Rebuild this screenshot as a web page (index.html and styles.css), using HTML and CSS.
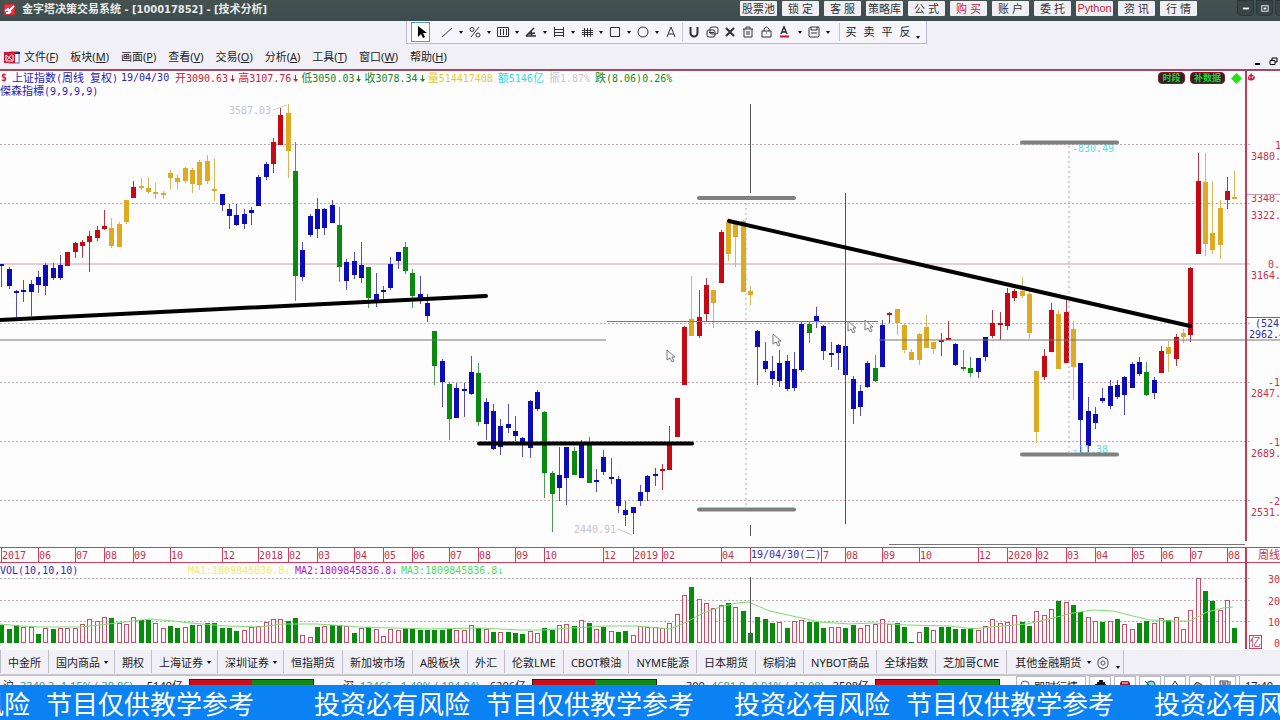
FILE: index.html
```html
<!DOCTYPE html>
<html lang="zh-CN">
<head>
<meta charset="utf-8">
<title>金字塔决策交易系统 - [100017852] - [技术分析]</title>
<link rel="stylesheet" href="styles.css">
</head>
<body>
<header class="titlebar">
  <svg class="app-logo" viewBox="0 0 13 13"><rect width="13" height="13" rx="1" fill="#b9202b"/><rect x="1.500" y="1.500" width="10" height="10" fill="#e5323e"/><path d="M2 8 5 6l1 2 5-5M3 10h3l2-2" stroke="#fff" stroke-width="2" fill="none"/></svg>
  <h1 class="title">金字塔决策交易系统 - [100017852] - [技术分析]</h1>
  <nav class="quick">
    <button>股票池</button><button>锁 定</button><button>客 服</button><button>策略库</button><button>公 式</button><button class="hot">购 买</button><button>账 户</button><button>委 托</button><button class="hot latin">Python</button><button>资 讯</button><button>行 情</button>
  </nav>
  <div class="win-controls">
    <button aria-label="最小化"><svg viewBox="0 0 10 10"><path d="M2 5h7" stroke="#fff" stroke-width="2"/></svg></button>
    <button aria-label="还原"><svg viewBox="0 0 10 10"><rect x="2" y="2" width="7" height="6" fill="none" stroke="#fff"/><rect x="4" y="4" width="3" height="2" fill="#fff"/></svg></button>
    <button aria-label="关闭"></button>
  </div>
</header>

<div class="toolrow">
  <div class="toolbar">
    <button class="pick" aria-label="选择"><svg viewBox="0 0 14 14"><path d="M4 1v11l3-3 2 4 2-1-2-4h4z" fill="#000"/></svg></button>
    <button aria-label="直线"><svg viewBox="0 0 14 14"><path d="M2 12 12 3"/></svg></button><i class="caret"></i>
    <button aria-label="百分比"><svg viewBox="0 0 14 14"><circle cx="4" cy="4.500" r="2"/><circle cx="10" cy="10" r="2"/><path d="M11 2 3 12"/></svg></button><i class="caret"></i>
    <button aria-label="周期线"><svg viewBox="0 0 14 14"><path d="M1.500 2.500h11v9h-11zM4.500 4v6M7.500 4v6M10.500 4v6"/></svg></button><i class="caret"></i>
    <button aria-label="角度线"><svg viewBox="0 0 14 14"><path d="M2 11h10M2 11l8-8M4 9l7-1M7 6l1 5" stroke-width="1.500"/></svg></button><i class="caret"></i>
    <button aria-label="通道"><svg viewBox="0 0 14 14"><path d="M2.500 2v10M11.500 2v10M2 4.500h10M2 7.500h10M2 10.500h10"/></svg></button><i class="caret"></i>
    <button aria-label="网格"><svg viewBox="0 0 14 14"><path d="M4.500 3v9M7.500 3v9M10.500 3v9M2 5.500h11M2 7.500h11M2 9.500h11"/></svg></button><i class="caret"></i>
    <button aria-label="矩形"><svg viewBox="0 0 14 14"><path d="M2.500 2.500h9v9h-9z"/></svg></button><i class="caret"></i>
    <button aria-label="圆"><svg viewBox="0 0 14 14"><circle cx="7" cy="7" r="5"/></svg></button><i class="caret"></i>
    <button aria-label="文字"><svg viewBox="0 0 14 14"><path d="M3 12 7 2l4 10M4 9h6"/></svg></button>
    <span class="sep"></span>
    <button class="wide" aria-label="磁铁"><svg viewBox="0 0 14 14"><path d="M3.500 2v6a3 3 0 0 0 7 0V2" stroke-width="2"/></svg></button>
    <button class="wide" aria-label="复制"><svg viewBox="0 0 14 14"><rect x="5" y="2" width="8" height="7" rx="2"/><rect x="2" y="5" width="8" height="7" rx="2"/><path d="M4 7.500h5"/></svg></button>
    <button class="wide" aria-label="删除"><svg viewBox="0 0 14 14"><path d="m3 3 8 8M11 3l-8 8" stroke-width="2"/></svg></button>
    <button class="wide" aria-label="清空"><svg viewBox="0 0 14 14"><path d="M2 4h10M5 4V2h4v2M3 4v8h8V4M6 6v4M8 6v4"/></svg></button>
    <button class="wide" aria-label="锁定"><svg viewBox="0 0 14 14"><path d="M3 6h9v6H3zM5 6V4q2.500-4 5 0v2M7 8h1"/></svg></button>
    <button class="wide" aria-label="颜色"><svg viewBox="0 0 14 14"><path d="m4 9 3-7 3 7M5 7h4" stroke-width="1.500"/><path d="M3 11.500h9" stroke="#c8102e" stroke-width="2"/></svg></button><i class="caret"></i>
    <button aria-label="保存"><svg viewBox="0 0 14 14"><path d="M2 3.500 3.500 2h8L12 3v8l-1 1H3l-1-1zM4 2v3h6V2M4 8h6"/></svg></button><i class="caret"></i>
    <span class="sep"></span>
    <button class="word">买</button><button class="word">卖</button><button class="word">平</button><button class="word">反</button><i class="caret low"></i>
  </div>
</div>

<div class="menubar">
  <svg class="doc-icon" viewBox="0 0 16 13"><rect x="6" y="1" width="9" height="11" fill="#fff" stroke="#47619b"/><path d="M6 2h10" stroke="#2e2a96" stroke-width="2"/><rect y="1" width="11" height="11" fill="#d31535"/><path d="M2 4v6h7V4M2 4l6 5M3 9l5-6" stroke="#fff" stroke-width="1" fill="none"/></svg>
  <nav class="menus">
    <button>文件(<u>F</u>)</button><button>板块(<u>M</u>)</button><button>画面(<u>P</u>)</button><button>查看(<u>V</u>)</button><button>交易(<u>O</u>)</button><button>分析(<u>A</u>)</button><button>工具(<u>T</u>)</button><button>窗口(<u>W</u>)</button><button>帮助(<u>H</u>)</button>
  </nav>
  <div class="doc-controls">
    <button aria-label="最小化文档"><svg viewBox="0 0 9 9"><path d="M1 7h5" stroke="#000" stroke-width="2"/></svg></button>
    <button aria-label="还原文档"><svg viewBox="0 0 9 9"><path d="M3 3V1h5v4H6M1 3.500h5v4H1z" fill="none" stroke="#000"/></svg></button>
  </div>
</div>

<main>
  <div class="info">
    <div class="info-main">
      <div class="quote">
        <b class="red">$</b>
        <span class="name blue"><em>上证指数</em>(<em>周线</em> <em>复权</em>)</span>
        <span class="blue date">19/04/30</span>
        <span class="prices"><span class="red"><em>开</em>3090.63<s></s></span><span class="red"><em>高</em>3107.76<s></s></span><span class="green"><em>低</em>3050.03<s></s></span><span class="green"><em>收</em>3078.34<s></s></span><span class="gold"><em>量</em>514417408</span></span>
        <span class="cyan"><em>额</em>5146<em>亿</em></span>
        <span class="gray"><em>振</em>1.87%</span>
        <span class="green"><em>跌</em>(8.06)0.26%</span>
      </div>
      <div class="indicator blue"><em>傑森指標</em>(9,9,9,9)</div>
    </div>
    <div class="badges">
      <button class="badge">时段</button><button class="badge">补数据</button>
      <svg class="diamond" viewBox="0 0 10 10"><path d="m5 0 5 5-5 5-5-5z" fill="#25e012"/></svg>
    </div>
    <div class="info-axis"><svg viewBox="0 0 9 9"><path d="M4 0v8M1 3h6M0 4q0 4 4 4t4-4" fill="none" stroke="#d01838" stroke-width="2"/></svg></div>
  </div>
  <svg class="chart" id="chart" viewBox="0 98 1280 552" role="img" aria-label="上证指数周线与成交量"></svg>
</main>

<nav class="tabs">
  <button>中金所</button><button>国内商品<i class="caret"></i></button><button>期权</button><button>上海证券<i class="caret"></i></button><button>深圳证券<i class="caret"></i></button><button>恒指期货</button><button>新加坡市场</button><button>A股板块</button><button>外汇</button><button>伦敦LME</button><button>CBOT粮油</button><button>NYME能源</button><button>日本期货</button><button>棕榈油</button><button>NYBOT商品</button><button>全球指数</button><button>芝加哥CME</button><button class="last">其他金融期货<i class="caret"></i><svg class="gear" viewBox="0 0 14 14"><path d="M5 2 7 1l2 1 2 1 1 2v4l-1 2-2 1-2 1-2-1-2-1-1-2V5l1-2z" fill="none" stroke="#555"/><circle cx="7" cy="7" r="2" fill="none" stroke="#555"/></svg><i class="caret low"></i></button>
</nav>

<div class="status">
  <div class="market"><span>沪</span><span class="teal">3340.3 -1.15% (-38.86)</span><span>5149亿</span></div><div class="ratio"></div>
  <div class="market"><span>深</span><span class="teal">13466. -1.48% (-184.84)</span><span>6206亿</span></div><div class="ratio"></div>
  <div class="market"><span>300</span><span class="teal">4681.8 -0.91% (-43.08)</span><span>3508亿</span></div><div class="ratio"></div>
  <div class="tray">
    <button class="live"><svg viewBox="0 0 12 12"><circle cx="6" cy="6" r="4" fill="none" stroke="#668"/></svg>即时行情</button>
    <button aria-label="用户"><svg viewBox="0 0 12 12"><path d="M1 4h2V2h2V0h4v2h2v2h1v6H1z" fill="#15181c"/></svg></button>
    <button aria-label="数据"><svg viewBox="0 0 12 12"><rect x="1" y="1" width="10" height="10" rx="3" fill="#a51035"/><path d="M3 3h6" stroke="#fff"/></svg></button>
    <button aria-label="搜索"><svg viewBox="0 0 12 12"><circle cx="7" cy="5" r="4" fill="#8fd6d6" stroke="#256"/><path d="m1 1 4 4" stroke="#153"/></svg></button>
    <button aria-label="提醒"><svg viewBox="0 0 12 12"><path d="M3 11V6l3-5 3 5v5z" fill="none" stroke="#333"/></svg></button>
    <button aria-label="云端"><svg viewBox="0 0 12 12"><path d="M0 7q1-6 5-4l7 5v4H0z" fill="#aaa" stroke="#333"/></svg></button>
    <button aria-label="日志"><svg viewBox="0 0 12 12"><path d="M1 1h8v9H1zM11 1v10M3 3h4M3 5h4" fill="#ccd" stroke="#444"/></svg></button>
    <time class="clock">17:40</time>
  </div>
</div>

<footer class="ticker">
  <p class="lead"><span>投资必有风险</span><span>节目仅供教学参考</span></p>
  <p><span>投资必有风险</span><span>节目仅供教学参考</span></p>
  <p><span>投资必有风险</span><span>节目仅供教学参考</span></p>
  <p><span>投资必有风险</span></p>
</footer>
<script src="chart.js"></script>
</body>
</html>
```
FILE: styles.css
```css
* { box-sizing: border-box; }
body {
  margin: 0;
  overflow-x: hidden;
  background: #fdfdfd;
  color: #222;
  font: 11px/16px "Noto Sans", "Noto Sans CJK SC", sans-serif;
}
button {
  margin: 0;
  padding: 0;
  border: 0;
  background: none;
  color: inherit;
  font: inherit;
  white-space: nowrap;
}
svg { display: block; flex: none; }

/* title bar */
.titlebar {
  display: flex;
  height: 21px;
  padding-left: 3px;
  align-items: flex-start;
  background: linear-gradient(#45524f, #3c4c4e);
  overflow: hidden;
}
.app-logo { width: 13px; height: 13px; margin: 3px 6px 0 0; }
.title {
  flex: 1;
  margin: 0;
  color: #e6eaea;
  font: 700 11px/19px "DejaVu Sans Condensed", "DejaVu Sans", "Noto Sans CJK SC", sans-serif;
  white-space: nowrap;
}
.quick { display: grid; grid-template-columns: repeat(11, 37px); gap: 5px; padding-top: 1px; }
.quick button {
  height: 15px;
  border-radius: 1px;
  background: #f1eff6;
  color: #333;
  line-height: 15px;
}
.quick .hot { color: #c42838; }
.quick .latin { font-family: "Liberation Sans", sans-serif; }
.win-controls { display: flex; gap: 2px; margin: 0 -12px 0 40px; }
.win-controls button {
  width: 17px;
  height: 16px;
  padding: 3px;
  border: 1px solid #2b3839;
  border-radius: 0 0 4px 4px;
  background: #394546;
}
.win-controls svg { width: 9px; height: 9px; }

/* drawing toolbar */
.toolrow { height: 24px; padding-left: 406px; background: #f1f0f7; }
.toolbar {
  display: inline-flex;
  height: 23px;
  padding: 0 4px;
  align-items: center;
  border: solid #b9b9cc;
  border-width: 0 1px 1px;
  background: #f6f5fa;
}
.toolbar button { width: 14px; display: flex; justify-content: center; }
.toolbar svg { width: 14px; height: 14px; fill: none; stroke: #333; }
.toolbar .pick {
  width: 19px;
  height: 20px;
  align-items: center;
  margin-right: 10px;
  border: 1px solid #549cc4;
  background: #fff;
}
.toolbar .pick svg { stroke: none; }
.toolbar .wide { width: 18px; }
.toolbar .word { width: 18px; }
.sep { width: 1px; height: 18px; margin: 0 2px 0 4px; background: #c3c3cf; }
.caret { display: inline-flex; width: 14px; justify-content: center; }
.caret::after { content: ""; border: 2px solid transparent; border-top: 3px solid #111; border-bottom: 0; }
.caret.low { width: 8px; align-self: flex-end; padding-bottom: 4px; }

/* menu */
.menubar {
  display: flex;
  height: 26px;
  padding: 0 2px 0 4px;
  align-items: center;
  background: #f1f0f7;
  border-bottom: 2px solid #a04a60;
}
.doc-icon { width: 16px; height: 13px; margin-right: 4px; }
.menus { display: flex; flex: 1; gap: 12px; }
.menus u { text-underline-offset: 1px; }
.doc-controls { display: flex; gap: 6px; padding-top: 8px; }
.doc-controls svg { width: 9px; height: 9px; }

/* quote strip */
.info { display: flex; height: 27px; font: 10px/14px "DejaVu Sans Mono", monospace; white-space: nowrap; }
.info em { font: 11px/13px "Noto Sans CJK SC", sans-serif; }
.info-main { flex: 1; }
.quote { display: flex; height: 13px; padding-left: 1px; gap: 5px; }
.quote > b { width: 6px; }
.name { width: 104px; }
.date { width: 49px; }
.prices { display: flex; }
.indicator { height: 13px; line-height: 13px; }
.quote s {
  display: inline-block;
  position: relative;
  width: 10px;
  height: 7px;
  text-decoration: none;
}
.quote s::before { content: ""; position: absolute; left: 4px; top: 0; width: 1px; height: 6px; background: currentColor; }
.quote s::after { content: ""; position: absolute; left: 2px; top: 4px; border: solid transparent; border-width: 3px 2px 0 3px; border-top-color: currentColor; }
.blue { color: #2a22b8; }
.red { color: #d0203c; }
.green { color: #168a1c; }
.gold { color: #d8cf3c; }
.cyan { color: #2be0e4; }
.gray { color: #c9c9cc; }
.badges { display: flex; gap: 5px; padding-right: 3px; }
.badge {
  height: 12px;
  margin-top: 1px;
  padding: 0 3px;
  border: 1px solid #8c1723;
  border-radius: 4px;
  background: #2d2424;
  color: #1fd52e;
  font: 700 9px/10px "Noto Sans CJK SC", sans-serif;
}
.badge:first-child { min-width: 27px; }
.badge + .badge { min-width: 35px; }
.diamond { width: 11px; height: 11px; margin: 2px 0 0 1px; }
.info-axis { width: 35px; border-left: 2px solid #c43c56; padding: 2px 0 0 1px; }
.info-axis svg { width: 7px; height: 8px; }

/* chart */
.chart { width: 100%; height: auto; }
.chart text { font: 10px "DejaVu Sans Mono", "Noto Sans CJK SC", monospace; fill: #c8324c; }
.chart .cjk { font: 11px "Noto Sans CJK SC", sans-serif; }
.chart .t-blue { fill: #342ab4; }
.chart .t-soft { fill: #c4c4d2; }
.chart .t-cyan { fill: #52e2e4; }
.chart .t-gold { fill: #f0ec70; }
.chart .t-purple { fill: #b414c4; }
.chart .t-lime { fill: #50dc5c; }
.grid { stroke: #c2a8b2; stroke-dasharray: 2 2; }
.zero { stroke: #cf9aa9; }
.frame { stroke: #d0405a; fill: none; }
.axis { stroke: #c43c56; stroke-width: 2; }
.cross { stroke: #777; }
.cross-dark { stroke: #555; }
.guide { stroke: #aaa; stroke-dasharray: 2 3; }
.range { stroke: #808080; stroke-width: 4; stroke-linecap: round; }
.trend { stroke: #000; stroke-width: 4; stroke-linecap: round; }
.mean { fill: none; stroke: #7ddc72; }
.leader { stroke: #ccc; }
.pointer { fill: #fff; stroke: #777; }
.vol-up { fill: #fff5f7; stroke: #c4506a; }
.vol-down { fill: #088c0c; }

/* market tabs */
.tabs {
  display: flex;
  height: 26px;
  padding-bottom: 1px;
  background: #f1f0f7;
  border-bottom: 2px solid #c4c4cc;
  overflow: hidden;
}
.tabs button {
  display: flex;
  padding: 2px 7px 0;
  align-items: center;
  border-left: 1px solid #bcbccb;
}
.tabs .caret { width: 8px; margin-right: -1px; justify-content: flex-end; }
.tabs .last { padding: 2px 4px 0 8px; border-right: 1px solid #bcbccb; }
.tabs .last .caret { width: 10px; }
.gear { width: 14px; height: 14px; margin-left: 6px; }

/* status strip */
.status {
  display: flex;
  height: 9px;
  padding-left: 3px;
  background: #f8f8fb;
  overflow: hidden;
  white-space: nowrap;
}
.market { display: flex; flex: 0 1 186px; gap: 6px; height: 16px; padding-top: 2px; }
.market + .ratio + .market { flex-basis: 218px; padding-left: 29px; }
.market span:last-child { margin-left: auto; margin-right: 6px; }
.teal { color: #4d9580; }
.ratio {
  flex: 0 0 125px;
  height: 12px;
  margin-top: 3px;
  border: 1px solid #222;
  background: linear-gradient(90deg, #cc0d1c 50%, #128a1a 50%);
}
.tray { display: flex; gap: 3px; margin-left: 16px; }
.tray button { width: 22px; height: 20px; padding: 3px 4px; border: 1px solid #b8b8c0; background: #fff; }
.tray svg { width: 12px; height: 12px; }
.tray .live { display: flex; width: 70px; gap: 3px; padding: 2px; }
.clock { padding: 2px 0 0 5px; border-left: 1px solid #b8b8c0; }

/* scrolling notice */
.ticker {
  display: flex;
  height: 35px;
  background: #0a82f4;
  color: #fff;
  font: 26px/35px "Noto Sans CJK SC", sans-serif;
  overflow: hidden;
  white-space: nowrap;
}
.ticker p { display: flex; flex: none; gap: 16px; margin: 0; padding-right: 40px; }
.ticker .lead { margin-left: -126px; padding-right: 60px; }
```
FILE: chart.js
```js
// One entry per week: body colour, then y of high, body top, body bottom, low.
const candles = `b264,264,266,287 b267,269,286,289 b290,291,293,317 b280,290,292,302 b280,284,292,316 b271,277,285,293 b263,265,286,295 b263,268,278,280 b255,265,278,280 r252,252,266,266
r242,243,252,258 r240,242,246,258 r231,236,242,272 r226,230,238,241 r210,226,229,230 y218,228,246,248 y222,224,247,247 y200,200,222,224 r181,187,198,198 y178,186,187,190
y177,188,192,194 y183,192,193,199 y191,193,195,199 y170,173,178,189 y175,178,182,189 y167,168,181,183 y168,170,184,193 y160,162,185,190 y155,161,181,184 y159,189,191,201
b194,194,205,211 b204,209,216,229 b204,215,225,226 b209,214,224,229 b207,210,213,225 b175,177,206,206 b162,164,177,180 r138,142,164,173 r108,115,145,145 y104,113,151,178
g142,171,276,301 b242,250,277,281 b214,216,235,237 b198,209,229,238 b208,209,228,235 b200,205,223,223 g207,225,267,282 b259,262,281,290 b252,261,275,279 b242,265,278,283
g267,267,298,308 b273,294,300,307 b286,290,291,299 b257,264,288,290 b252,252,261,269 g242,247,271,274 g269,273,296,308 b276,294,298,304 b294,303,316,322 g331,331,366,385
b359,361,382,407 g382,384,419,440 b383,388,418,418 b383,389,391,417 b356,372,394,395 g363,373,422,426 b398,402,424,440 b404,411,449,450 b419,426,447,455 b404,424,428,433
b416,431,436,441 b437,438,443,457 b400,401,448,458 b390,392,409,411 g411,412,473,498 g471,473,494,532 b447,475,488,501 b447,447,478,505 g447,451,475,475 b440,445,478,478
g437,443,483,483 b469,480,482,492 b450,457,472,475 b458,477,479,484 b476,479,506,513 b501,510,515,526 b507,507,513,534 b485,492,501,506 b475,476,492,501 b468,474,476,486
r464,469,470,490 r426,445,470,470 r398,398,437,437 r326,327,385,385 y276,319,336,336 r290,317,336,338 r278,285,314,321 y290,290,303,328 r230,232,283,283 y218,222,254,261
y222,224,237,267 y220,221,292,292 y286,291,295,305 b330,331,347,385 b342,361,369,372 b356,371,379,385 b350,363,381,387 b355,361,389,391 b352,369,388,391 b322,324,370,372
g321,324,333,343 b307,316,321,328 b325,326,351,360 b342,353,354,367 b344,345,353,370 b340,346,375,380 b376,379,409,424 b385,391,407,416 b361,363,387,388 g355,368,381,382
b320,325,367,367 r312,313,315,323 y309,309,323,335 y323,325,350,353 y349,352,360,360 y333,334,360,365 y315,327,348,348 y342,342,349,354 r333,340,341,356 r321,338,340,340
b343,344,365,366 g350,367,368,371 g357,368,373,377 b358,358,372,378 b337,337,357,361 r310,323,336,338 r312,323,325,340 r288,293,326,330 r289,291,298,301 y277,291,296,298
y290,294,333,339 y371,371,432,443 r349,356,377,380 r303,310,352,352 y310,314,369,369 r299,312,363,363 y321,329,367,400 b363,363,420,456 b397,411,446,453 b407,414,423,429
b388,398,401,403 b380,386,406,409 b380,385,397,399 b376,377,395,415 b362,364,388,388 b357,362,374,376 g362,372,395,396 b377,380,393,399 r346,351,373,373 y341,347,354,372
r334,337,359,366 y329,333,337,343 r267,268,335,342 r153,181,254,254 y153,182,244,256 y181,233,250,254 y200,208,245,259 r177,191,200,209 y171,197,198,198`.split(/\s+/);

// Volume per week: g = falling, r = rising, then bar height in thirds of a unit.
const volumes = `g55 g42 g53 r47 r49 g27 r45 g42 r44 r44 r46 r58 r72 r67 r79 g76 r59 r57 r78 g70 g70 r60 r45 g51 g44 r47 g55 r54 g60 g60
g46 g46 g37 r40 r48 r51 r63 r72 r72 g67 g74 r24 r17 g49 r51 g55 g53 r51 g30 r45 g47 r42 r21 r42 r40 g45 g42 g39 g39 g39
g39 g42 r39 r39 r55 g45 r41 g34 r32 g34 g31 g28 r35 r30 g46 g40 r55 r57 g52 r70 g60 r42 g48 r37 g34 g37 r24 r51 r49 r47
r45 r60 r87 r144 g168 r132 r120 r105 r115 g120 r108 g97 g31 g79 g71 g61 r62 g46 r67 r69 g63 g64 g46 r48 r48 g44 g53 r45 r54 r56
r72 r57 g60 g49 g4 r33 g49 r39 g49 g49 g43 g41 g44 r39 r51 r72 r60 r63 r84 g64 g52 r95 r84 r101 g127 r123 g115 g94 r78 r67
g62 r66 g72 r57 r42 g61 g66 r60 r74 g69 r78 r42 r99 r195 g156 g127 r99 r130 g46`.split(/\s+/);

const months = [[0, '2017'], [5, '06'], [10, '07'], [14, '08'], [18, '09'], [23, '10'], [30, '12'], [35, '2018'], [39, '02'], [43, '03'], [48, '04'], [52, '05'], [56, '06'], [61, '07'], [65, '08'], [70, '09'], [74, '10'], [82, '12'], [86, '2019'], [90, '02'], [98, '04'], [115, '08'], [120, '09'], [125, '10'], [133, '12'], [137, '2020'], [141, '02'], [145, '03'], [149, '04'], [154, '05'], [158, '06'], [162, '07'], [167, '08']];
const mean = [0, 624, 20, 626, 40, 627, 80, 627, 100, 625, 133, 621, 150, 619, 173, 621, 190, 623, 227, 626, 260, 627, 283, 624, 317, 624, 360, 627, 430, 629, 480, 628, 520, 630, 543, 630, 570, 628, 607, 626, 637, 626, 670, 629, 687, 622, 703, 613, 720, 607, 737, 603, 748, 602, 770, 611, 797, 617, 820, 622, 850, 624, 873, 623, 907, 625, 950, 626, 973, 629, 990, 627, 1027, 624, 1053, 618, 1073, 613, 1093, 610, 1113, 611, 1133, 616, 1150, 620, 1173, 621, 1190, 621, 1207, 612, 1223, 608, 1233, 607];

const fills = { b: '#0b0bb8', r: '#c60912', y: '#e0aa20', g: '#098a0e' };
const wicks = { b: '#5550b4', r: '#b33542', y: '#d9b65c', g: '#4f9a52' };
const weekX = n => Math.round(1.3 + n * 7.34);
const out = [];
const line = (cls, x1, y1, x2, y2) => out.push(`<line class="${cls}" x1="${x1}" y1="${y1}" x2="${x2}" y2="${y2}"/>`);
const rect = (x, y, w, h, extra) => out.push(`<rect x="${x}" y="${y}" width="${w}" height="${h}" ${extra}/>`);
const text = (x, y, value, cls = '') => out.push(`<text x="${x}" y="${y}" class="${cls}">${value}</text>`);

[144, 203, 323, 382, 441, 500, 578, 600, 621].forEach(y => line('grid', 0, y + .5, 1250, y + .5));
line('zero', 0, 264, 1250, 264);

candles.forEach((entry, n) => {
  const kind = entry[0];
  const [high, top, bottom, low] = entry.slice(1).split(',').map(Number);
  rect(weekX(n), high, 1, Math.max(1, low - high), `fill="${wicks[kind]}"`);
  rect(weekX(n) - 2, top, 5, Math.max(2, bottom - top), `fill="${fills[kind]}"`);
});

volumes.forEach((entry, n) => {
  const h = Math.round(entry.slice(1) / 3);
  if (entry[0] === 'g') rect(weekX(n) - 2, 643 - h, 5, h, 'class="vol-down"');
  else rect(weekX(n) - 1.5, 643.5 - h, 4, h - 1, 'class="vol-up"');
});
out.push(`<polyline class="mean" points="${mean.join(' ')}"/>`);

// crosshairs and measuring ranges
line('cross', 0, 340, 606, 340);
line('cross', 607, 321.5, 878, 321.5);
line('cross', 879, 340, 1280, 340);
line('cross-dark', 750.5, 104, 750.5, 193);
line('cross-dark', 750.5, 525, 750.5, 536);
line('cross-dark', 750.5, 577, 750.5, 643);
line('cross-dark', 845.5, 193, 845.5, 524);
line('guide', 746, 203, 746, 507);
line('guide', 1069, 146, 1069, 452);
line('range', 699, 198, 794, 198);
line('range', 699, 509.5, 794, 509.5);
text(1072, 152, '-830.49', 't-cyan');
text(1072, 453, '-11.38', 't-cyan');
line('range', 1022, 142.5, 1117, 142.5);
line('range', 1022, 454.5, 1117, 454.5);
line('trend', 0, 320, 486, 296);
line('trend', 479, 443.5, 692, 443.5);
line('trend', 729, 221, 1190, 326);
text(229, 114, '3587.03', 't-soft');
line('leader', 273, 110, 287, 105);
text(574, 533, '2440.91', 't-soft');
line('leader', 618, 529, 632, 535);
[[667, 350], [773, 334], [848, 321], [865, 320]].forEach(([x, y]) =>
  out.push(`<path class="pointer" d="M${x} ${y}v10l3-2 2 4 2-1-2-4h3z"/>`));

// price axis
line('axis', 1246, 98, 1246, 541);
line('axis', 1246, 547, 1246, 649);
[[160, '3480.'], [202, '3340.'], [219, '3322.'], [279, '3164.'], [397, '2847.'], [457, '2689.'], [516, '2531.']].forEach(([y, v]) => text(1251, y, v));
text(1275, 149, '1');
text(1268, 268, '0.');
text(1268, 386, '-1');
text(1268, 446, '-1');
text(1268, 505, '-2');
line('zero', 1247, 194.5, 1280, 194.5);
line('frame', 1247, 317.5, 1280, 317.5);
text(1255, 327, '(524)', 't-blue');
text(1249, 338, '2962.4', 't-blue');

// date axis
line('cross', 889, 544.5, 1245, 544.5);
line('frame', 0, 547.5, 1280, 547.5);
line('frame', 0, 562.5, 1280, 562.5);
months.forEach(([n, label]) => {
  line('frame', weekX(n) + .5, 548, weekX(n) + .5, 562);
  text(weekX(n) + 1, 559, label);
});
line('frame', 750.5, 548, 750.5, 562);
line('frame', 821.5, 548, 821.5, 562);
text(751, 558, '19/04/30(二)', 't-blue');
text(823, 559, '7');
text(1258, 559, '周线', 'cjk');

// volume pane
text(0, 574, 'VOL(10,10,10)', 't-blue');
text(188, 574, 'MA1:1809845836.8↓', 't-gold');
text(295, 574, 'MA2:1809845836.8↓', 't-purple');
text(401, 574, 'MA3:1809845836.8↓', 't-lime');
[[583, '30'], [605, '20'], [626, '10']].forEach(([y, v]) => text(1268, y, v));
text(1274, 647, '0');
rect(1249.5, 635.5, 12, 13, 'class="frame"');
text(1250, 646, '亿', 'cjk');

document.getElementById('chart').innerHTML = out.join('');
```
